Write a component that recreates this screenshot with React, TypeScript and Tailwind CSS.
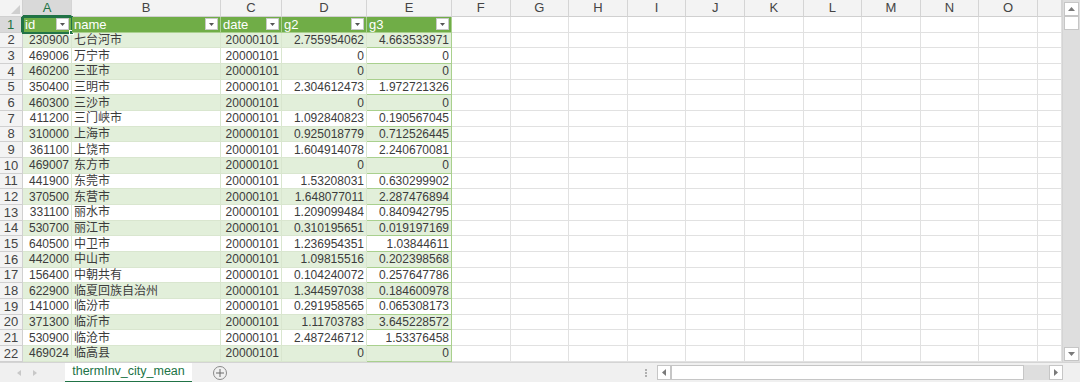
import React from 'react';

const rows: [string, string, string, string, string][] = [
  ['230900', '七台河市', '20000101', '2.755954062', '4.663533971'],
  ['469006', '万宁市', '20000101', '0', '0'],
  ['460200', '三亚市', '20000101', '0', '0'],
  ['350400', '三明市', '20000101', '2.304612473', '1.972721326'],
  ['460300', '三沙市', '20000101', '0', '0'],
  ['411200', '三门峡市', '20000101', '1.092840823', '0.190567045'],
  ['310000', '上海市', '20000101', '0.925018779', '0.712526445'],
  ['361100', '上饶市', '20000101', '1.604914078', '2.240670081'],
  ['469007', '东方市', '20000101', '0', '0'],
  ['441900', '东莞市', '20000101', '1.53208031', '0.630299902'],
  ['370500', '东营市', '20000101', '1.648077011', '2.287476894'],
  ['331100', '丽水市', '20000101', '1.209099484', '0.840942795'],
  ['530700', '丽江市', '20000101', '0.310195651', '0.019197169'],
  ['640500', '中卫市', '20000101', '1.236954351', '1.03844611'],
  ['442000', '中山市', '20000101', '1.09815516', '0.202398568'],
  ['156400', '中朝共有', '20000101', '0.104240072', '0.257647786'],
  ['622900', '临夏回族自治州', '20000101', '1.344597038', '0.184600978'],
  ['141000', '临汾市', '20000101', '0.291958565', '0.065308173'],
  ['371300', '临沂市', '20000101', '1.11703783', '3.645228572'],
  ['530900', '临沧市', '20000101', '2.487246712', '1.53376458'],
  ['469024', '临高县', '20000101', '0', '0'],
];

const letters = ['A', 'B', 'C', 'D', 'E', 'F', 'G', 'H', 'I', 'J', 'K', 'L', 'M', 'N', 'O', ''];
const headers = ['id', 'name', 'date', 'g2', 'g3'];

const FilterBtn = () => (
  <span className="ml-auto mr-[2px] flex h-[12px] w-[13px] shrink-0 items-center justify-center border border-[#c8c8c8] bg-white">
    <svg width="5" height="3" viewBox="0 0 5 3"><path d="M0 0h5L2.5 3z" fill="#555" /></svg>
  </span>
);

const font = { fontFamily: '"Liberation Sans", "Noto Sans CJK SC", sans-serif' };

export default function App() {
  return (
    <div className="flex h-[382px] w-[1080px] flex-col overflow-hidden bg-white text-[12px] text-[#3c3c3c]" style={font}>
      <div className="flex h-[362px]">
        {/* sheet */}
        <div className="grid w-[1062px] grid-cols-[23px_49px_149px_61px_85px_85px_repeat(10,58.6px)_24px] grid-rows-[17px_repeat(22,15.68px)] overflow-hidden">
          {/* corner */}
          <div className="relative border-b border-r border-[#d0d0d0] bg-[#f3f3f3]">
            <svg className="absolute bottom-[2px] right-[2px]" width="9" height="9" viewBox="0 0 9 9"><path d="M9 0V9H0z" fill="#cfcfcf" /></svg>
          </div>
          {letters.map((l, i) => (
            <div
              key={'h' + i}
              className={`flex items-center justify-center border-r border-[#d4d4d4] text-[13px] text-[#444] ${
                i === 0 ? 'border-b-2 border-b-[#217346] bg-[#d9d9d9] text-[#217346]' : 'border-b border-b-[#d0d0d0] bg-[#f3f3f3]'
              }`}
            >
              {l}
            </div>
          ))}

          {/* row 1 */}
          <div className="flex items-center justify-center border-b border-r-2 border-[#d0d0d0] border-r-[#217346] bg-[#d9d9d9] text-[13px] text-[#217346]">1</div>
          {headers.map((h, i) => (
            <div
              key={'t' + i}
              className={`relative flex items-center border-b border-r border-[#a9d08e] bg-[#70ad47] pl-[2px] text-[13px] text-white ${
                i === 0 ? 'outline-2 -outline-offset-1 outline-[#217346]' : ''
              }`}
            >
              <span>{h}</span>
              <FilterBtn />
              {i === 0 && <span className="absolute -bottom-[3px] -right-[3px] h-[5px] w-[5px] border border-white bg-[#217346]" />}
            </div>
          ))}
          {letters.slice(5).map((_, i) => (
            <div key={'e1' + i} className="border-b border-r border-[#e1e1e1]" />
          ))}

          {rows.map((r, ri) => {
            const band = ri % 2 === 0 ? 'bg-[#e2efda]' : 'bg-white';
            return (
              <React.Fragment key={ri}>
                <div className="flex items-center justify-center border-b border-r border-[#d0d0d0] bg-[#f3f3f3] text-[13px] text-[#444]">
                  {ri + 2}
                </div>
                <div className={`flex items-center justify-end border-b border-r border-[#d9e6cf] pr-[2px] ${band}`}>{r[0]}</div>
                <div className={`flex items-center border-b border-r border-[#d9e6cf] pl-[2px] ${band}`}>{r[1]}</div>
                <div className={`flex items-center justify-end border-b border-r border-[#d9e6cf] pr-[2px] ${band}`}>{r[2]}</div>
                <div className={`flex items-center justify-end border-b border-r border-[#d9e6cf] pr-[2px] ${band}`}>{r[3]}</div>
                <div className={`flex items-center justify-end border-b border-r border-[#a9d08e] pr-[2px] ${band}`}>{r[4]}</div>
                {letters.slice(5).map((_, i) => (
                  <div key={'e' + i} className="border-b border-r border-[#e1e1e1]" />
                ))}
              </React.Fragment>
            );
          })}
        </div>

        {/* vertical scrollbar */}
        <div className="flex w-[18px] flex-col border-l border-[#d4d4d4] bg-[#dedede]">
          <div className="mx-auto mt-[2px] flex h-[14px] w-[15px] items-center justify-center border border-[#c6c6c6] bg-white">
            <svg width="7" height="4" viewBox="0 0 7 4"><path d="M0 4h7L3.5 0z" fill="#7a7a7a" /></svg>
          </div>
          <div className="mx-auto h-[14px] w-[15px] border border-[#c6c6c6] bg-white" />
          <div className="flex-1" />
          <div className="mx-auto mb-[1px] flex h-[14px] w-[15px] items-center justify-center border border-[#c6c6c6] bg-white">
            <svg width="7" height="4" viewBox="0 0 7 4"><path d="M0 0h7L3.5 4z" fill="#7a7a7a" /></svg>
          </div>
        </div>
      </div>

      {/* sheet tabs bar */}
      <div className="flex h-[20px] items-center border-t border-[#d4d4d4] bg-[#f0f0f0]">
        <div className="flex w-[65px] items-center gap-[12px] pl-[17px]">
          <svg width="4" height="6" viewBox="0 0 4 6"><path d="M4 0v6L0 3z" fill="#c8c8c8" /></svg>
          <svg width="4" height="6" viewBox="0 0 4 6"><path d="M0 0v6l4-3z" fill="#c8c8c8" /></svg>
        </div>
        <div className="flex h-[20px] w-[127px] items-center justify-center border-b-2 border-[#217346] bg-white text-[12.5px] text-[#217346]">
          thermInv_city_mean
        </div>
        <div className="ml-[21px] flex h-[14px] w-[14px] items-center justify-center rounded-full border border-[#8a8a8a] text-[#6a6a6a]">
          <svg width="8" height="8" viewBox="0 0 8 8"><path d="M4 0v8M0 4h8" stroke="#6a6a6a" strokeWidth="1" /></svg>
        </div>
        <div className="flex-1" />
        <div className="mr-[10px] flex flex-col gap-[1px]">
          <span className="h-[2px] w-[2px] bg-[#b0b0b0]" />
          <span className="h-[2px] w-[2px] bg-[#b0b0b0]" />
          <span className="h-[2px] w-[2px] bg-[#b0b0b0]" />
        </div>
        <div className="flex h-[15px] w-[406px] items-stretch bg-[#dedede]">
          <div className="flex w-[14px] items-center justify-center border border-[#c6c6c6] bg-white">
            <svg width="4" height="7" viewBox="0 0 4 7"><path d="M4 0v7L0 3.5z" fill="#7a7a7a" /></svg>
          </div>
          <div className="w-[353px] border border-[#c6c6c6] bg-white" />
          <div className="flex-1" />
          <div className="flex w-[14px] items-center justify-center border border-[#c6c6c6] bg-white">
            <svg width="4" height="7" viewBox="0 0 4 7"><path d="M0 0v7l4-3.5z" fill="#7a7a7a" /></svg>
          </div>
        </div>
        <div className="w-[17px]" />
      </div>
    </div>
  );
}
